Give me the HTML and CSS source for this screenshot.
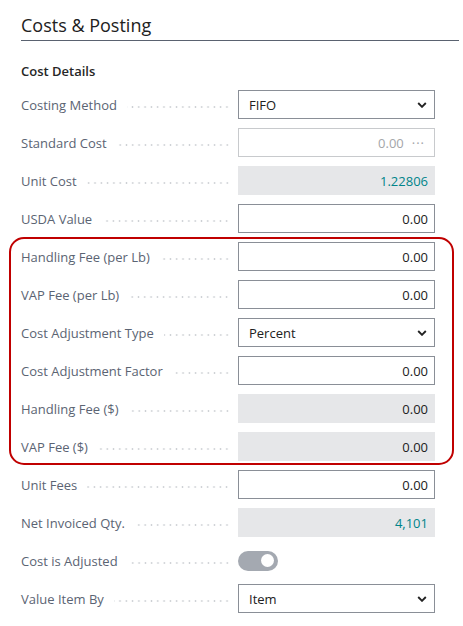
FILE: index.html
```html
<!DOCTYPE html>
<html>
<head>
<meta charset="utf-8">
<link rel="stylesheet" href="styles.css">
</head>
<body>
<div class="page">
  <h2 class="section-title">Costs &amp; Posting</h2>
  <div class="group-title">Cost Details</div>
  <div class="fields">
    <div class="row">
      <div class="label"><span>Costing Method</span><span class="leader"></span></div>
      <div class="input select"><span>FIFO</span><svg class="chev" viewBox="0 0 10 6" width="10" height="6"><path d="M1.2 1 L5 4.8 L8.8 1" fill="none" stroke="#222" stroke-width="1.9"/></svg></div>
    </div>
    <div class="row">
      <div class="label"><span>Standard Cost</span><span class="leader"></span></div>
      <div class="input muted num"><span>0.00</span><span class="more">···</span></div>
    </div>
    <div class="row">
      <div class="label"><span>Unit Cost</span><span class="leader"></span></div>
      <div class="input readonly num link"><span>1.22806</span></div>
    </div>
    <div class="row">
      <div class="label"><span>USDA Value</span><span class="leader"></span></div>
      <div class="input num"><span>0.00</span></div>
    </div>
    <div class="highlight">
      <div class="row">
        <div class="label"><span>Handling Fee (per Lb)</span><span class="leader"></span></div>
        <div class="input num"><span>0.00</span></div>
      </div>
      <div class="row">
        <div class="label"><span>VAP Fee (per Lb)</span><span class="leader"></span></div>
        <div class="input num"><span>0.00</span></div>
      </div>
      <div class="row">
        <div class="label"><span>Cost Adjustment Type</span><span class="leader"></span></div>
        <div class="input select"><span>Percent</span><svg class="chev" viewBox="0 0 10 6" width="10" height="6"><path d="M1.2 1 L5 4.8 L8.8 1" fill="none" stroke="#222" stroke-width="1.9"/></svg></div>
      </div>
      <div class="row">
        <div class="label"><span>Cost Adjustment Factor</span><span class="leader"></span></div>
        <div class="input num"><span>0.00</span></div>
      </div>
      <div class="row">
        <div class="label"><span>Handling Fee ($)</span><span class="leader"></span></div>
        <div class="input readonly num"><span>0.00</span></div>
      </div>
      <div class="row">
        <div class="label"><span>VAP Fee ($)</span><span class="leader"></span></div>
        <div class="input readonly num"><span>0.00</span></div>
      </div>
    </div>
    <div class="row">
      <div class="label"><span>Unit Fees</span><span class="leader"></span></div>
      <div class="input num"><span>0.00</span></div>
    </div>
    <div class="row">
      <div class="label"><span>Net Invoiced Qty.</span><span class="leader"></span></div>
      <div class="input readonly num link"><span>4,101</span></div>
    </div>
    <div class="row">
      <div class="label"><span>Cost is Adjusted</span><span class="leader"></span></div>
      <div class="toggle-cell"><span class="toggle"><span class="knob"></span></span></div>
    </div>
    <div class="row">
      <div class="label"><span>Value Item By</span><span class="leader"></span></div>
      <div class="input select"><span>Item</span><svg class="chev" viewBox="0 0 10 6" width="10" height="6"><path d="M1.2 1 L5 4.8 L8.8 1" fill="none" stroke="#222" stroke-width="1.9"/></svg></div>
    </div>
  </div>
</div>
</body>
</html>
```
FILE: styles.css
```css
html, body {
  margin: 0;
  padding: 0;
  background: #ffffff;
}
body {
  font-family: "Open Sans", "Noto Sans", sans-serif;
  font-size: 13px;
  color: #212121;
}
.page {
  padding: 0 4px 0 21px;
}
.section-title {
  margin: 0;
  padding: 13px 0 3px 0;
  font-size: 18px;
  line-height: 24px;
  font-weight: 400;
  color: #212121;
  border-bottom: 1px solid #5a6270;
}
.group-title {
  margin-top: 20px;
  line-height: 20px;
  font-size: 13px;
  font-weight: 600;
  color: #262626;
}
.fields {
  margin-top: 9px;
  display: flex;
  flex-direction: column;
  gap: 9px;
}
.highlight {
  position: relative;
  display: flex;
  flex-direction: column;
  gap: 9px;
}
.highlight::after {
  content: "";
  position: absolute;
  top: -5px;
  bottom: -4px;
  left: -12px;
  right: 5px;
  border: 2.5px solid #c00000;
  border-radius: 15px;
  pointer-events: none;
}
.row {
  display: grid;
  grid-template-columns: 209px 197px;
  column-gap: 8px;
  height: 29px;
  align-items: center;
}
.label {
  display: flex;
  align-items: center;
  color: #5b6473;
  white-space: nowrap;
  gap: 10px;
}
.leader {
  flex: 1;
  height: 2px;
  margin-top: 4px;
  background-image: radial-gradient(circle, #cdd0d4 0.8px, transparent 1.1px);
  background-size: 6.3px 2px;
  background-position: right center;
  background-repeat: repeat-x;
}
.input {
  box-sizing: border-box;
  height: 29px;
  border: 1px solid #8a8f97;
  background: #fff;
  display: flex;
  align-items: center;
  padding: 0 6px 0 10px;
  color: #212121;
}
.input.num {
  justify-content: flex-end;
}
.input.select {
  justify-content: space-between;
  padding-right: 7px;
}
.chev {
  display: block;
}
.input.muted {
  border-color: #c8cacd;
  color: #a4a6a9;
  padding-right: 9px;
}
.more {
  margin-left: 8px;
  letter-spacing: 1px;
  color: #a4a6a9;
}
.input.readonly {
  border-color: #e6e7e9;
  background: #e6e7e9;
}
.input.link {
  color: #00848a;
}
.toggle-cell {
  display: flex;
  align-items: center;
}
.toggle {
  width: 40px;
  height: 20px;
  border-radius: 10px;
  background: #a4a9b1;
  display: flex;
  align-items: center;
  justify-content: flex-end;
  padding-right: 4px;
  box-sizing: border-box;
}
.knob {
  width: 13px;
  height: 13px;
  border-radius: 50%;
  background: #fff;
}
```
